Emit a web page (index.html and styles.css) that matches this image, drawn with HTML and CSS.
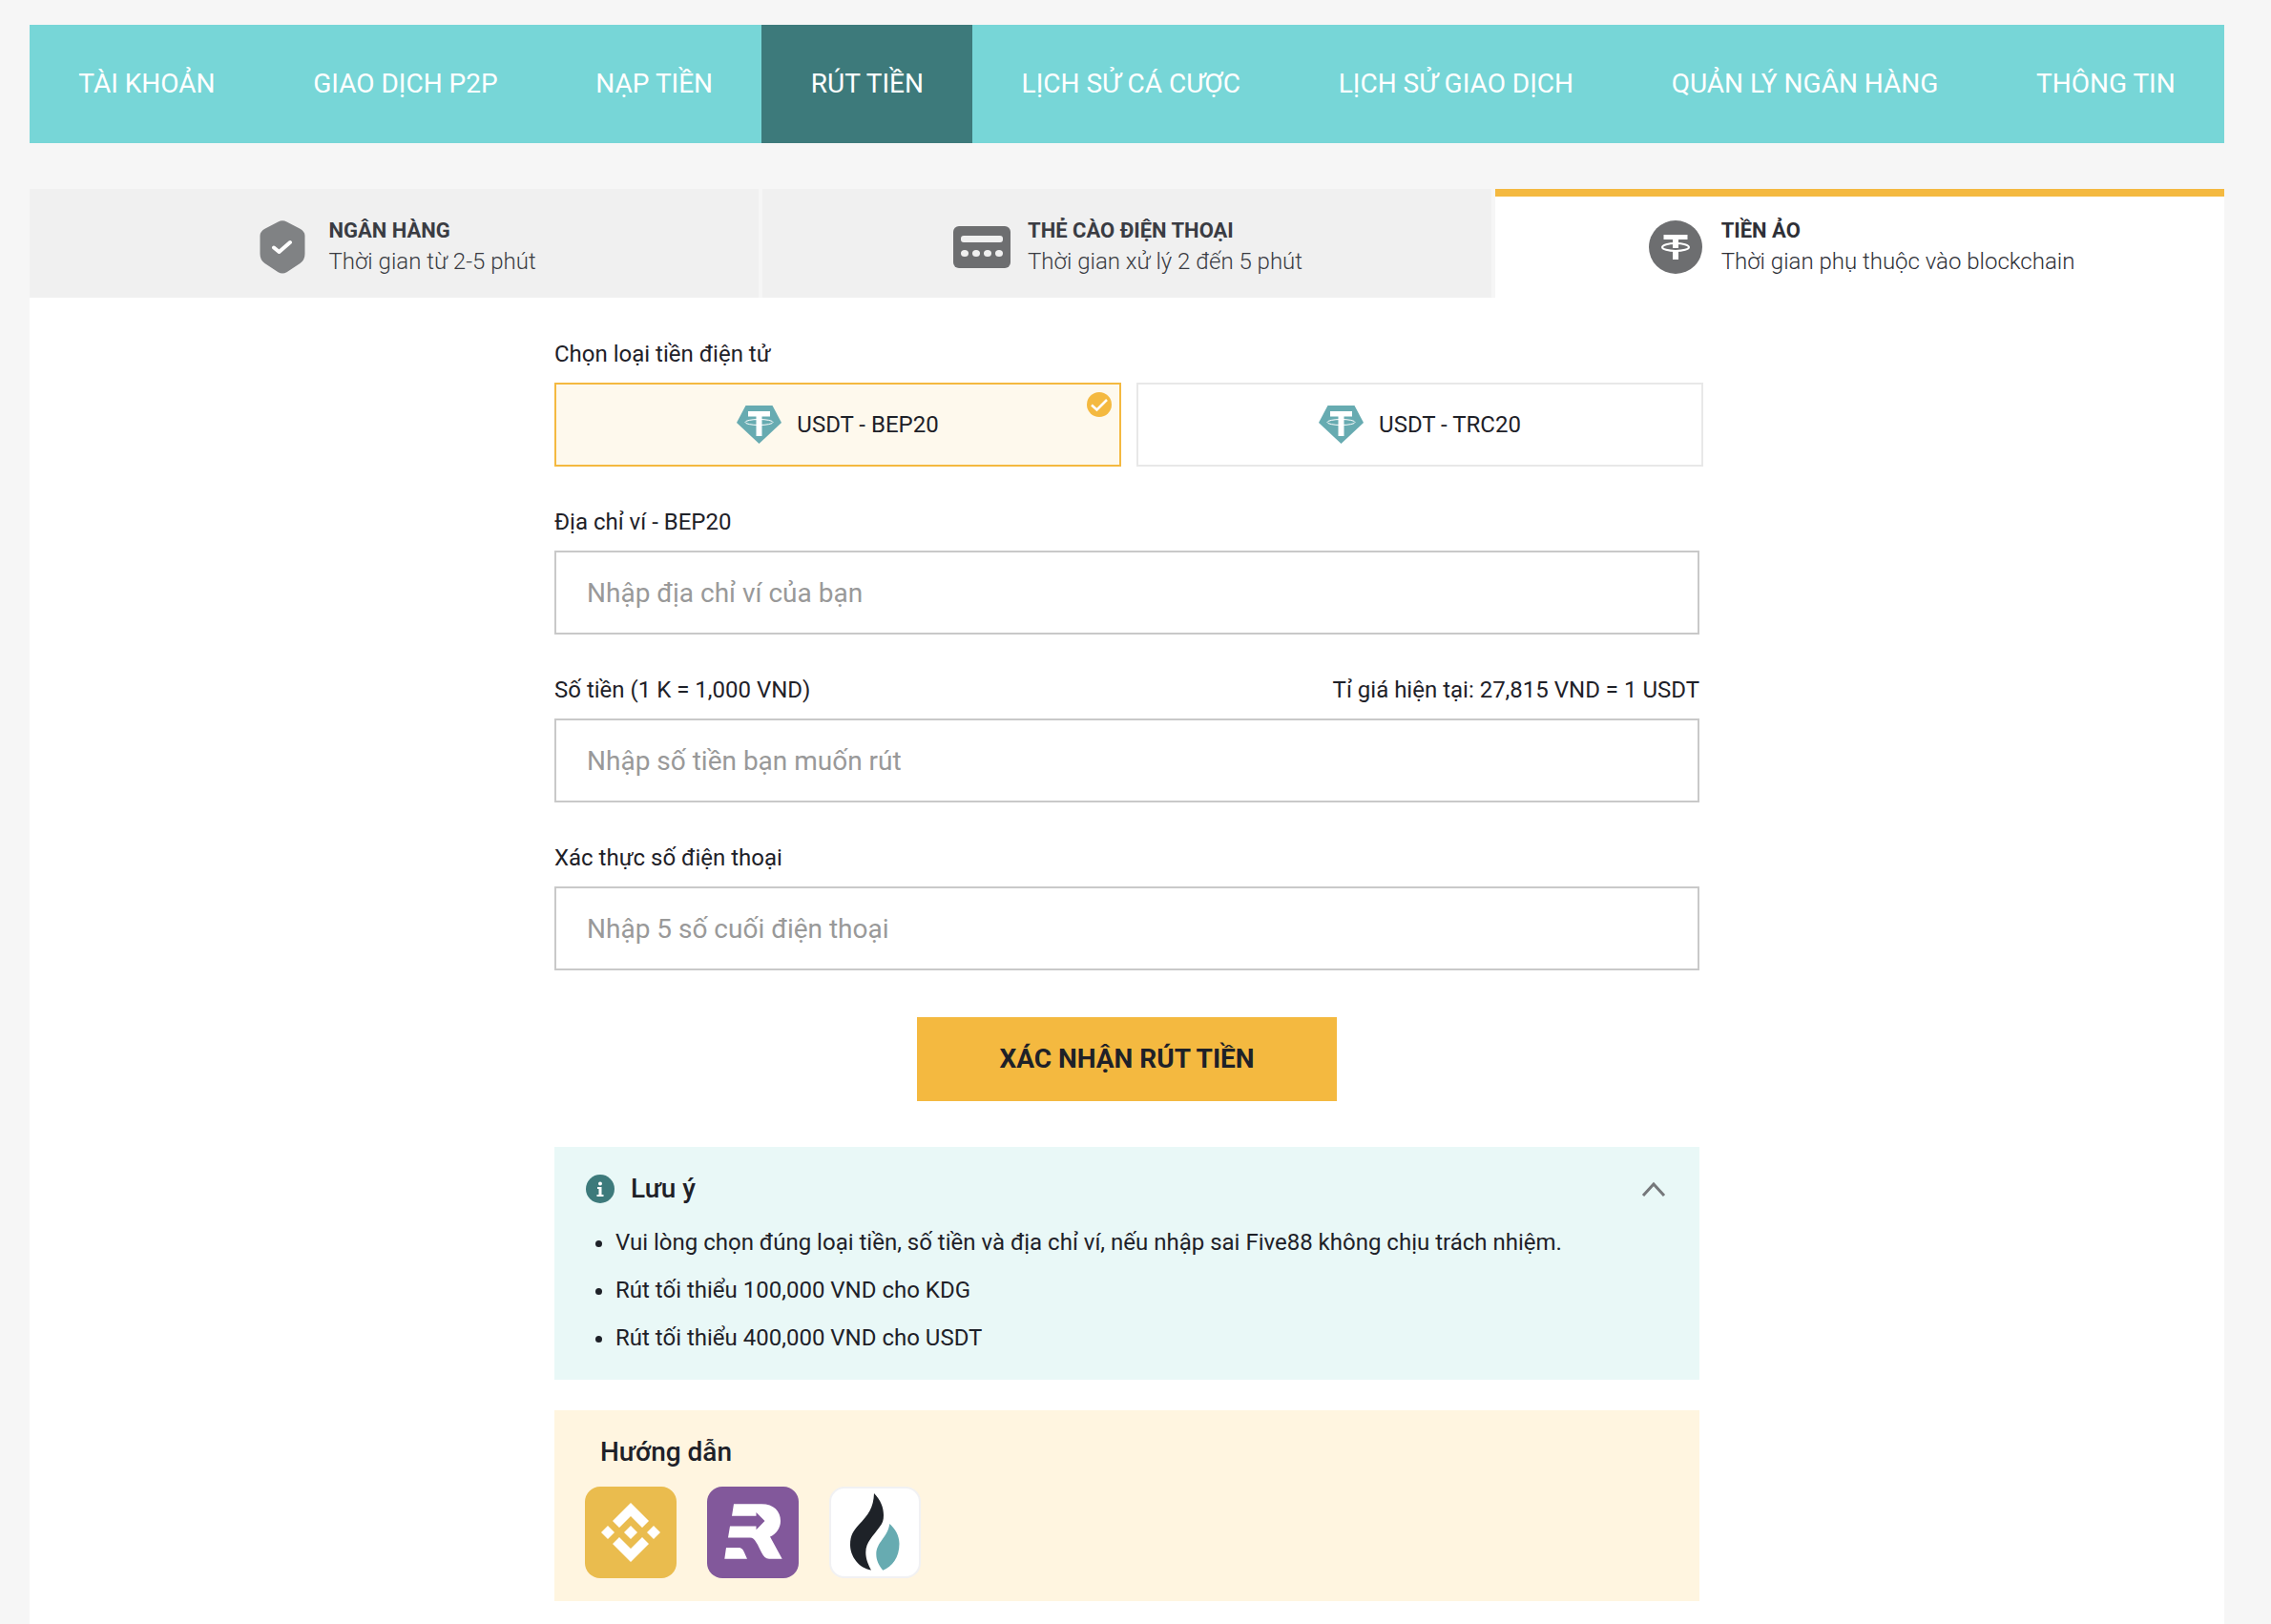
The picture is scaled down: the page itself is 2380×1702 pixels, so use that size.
FILE: index.html
```html
<!DOCTYPE html>
<html lang="vi">
<head>
    <meta charset="UTF-8">
    <meta name="viewport" content="width=device-width, initial-scale=1">
    <title>Rút tiền</title>
    <link rel="stylesheet" href="styles.css">
</head>
<body>
    <nav class="main-nav">
        <a href="#">TÀI KHOẢN</a>
        <a href="#">GIAO DỊCH P2P</a>
        <a href="#">NẠP TIỀN</a>
        <a href="#" class="active">RÚT TIỀN</a>
        <a href="#">LỊCH SỬ CÁ CƯỢC</a>
        <a href="#">LỊCH SỬ GIAO DỊCH</a>
        <a href="#">QUẢN LÝ NGÂN HÀNG</a>
        <a href="#">THÔNG TIN</a>
    </nav>

    <div class="tabs">
        <a href="#" class="tab">
            <svg class="tab-icon" viewBox="0 0 60 60">
                <path d="M25.5 3.4Q30 1 34.500 3.400L48 10.500Q53.500 13.500 53.500 18V37Q53.500 43.500 48.500 47L34.500 56.200Q30 59 25.500 56.200L11.500 47Q6.500 43.500 6.500 37V18Q6.500 13.500 12 10.500Z" fill="#808284"/>
                <path d="M21 30.500L26.500 35L38 25" fill="none" stroke="#fff" stroke-width="4" stroke-linecap="round" stroke-linejoin="round"/>
            </svg>
            <span class="tab-text">
                <strong>NGÂN HÀNG</strong>
                <span>Thời gian từ 2-5 phút</span>
            </span>
        </a>
        <a href="#" class="tab">
            <svg class="tab-icon" viewBox="0 0 60 60">
                <rect x="0" y="8" width="60" height="44" rx="6" fill="#6d6e70"/>
                <rect x="8" y="18" width="44" height="7" rx="3" fill="#f0f0f0"/>
                <g fill="#f0f0f0">
                    <ellipse cx="12" cy="36.500" rx="4" ry="3.500"/>
                    <ellipse cx="24" cy="36.500" rx="4" ry="3.500"/>
                    <ellipse cx="36" cy="36.500" rx="4" ry="3.500"/>
                    <ellipse cx="48" cy="36.500" rx="4" ry="3.500"/>
                </g>
            </svg>
            <span class="tab-text">
                <strong>THẺ CÀO ĐIỆN THOẠI</strong>
                <span>Thời gian xử lý 2 đến 5 phút</span>
            </span>
        </a>
        <a href="#" class="tab active">
            <svg class="tab-icon" viewBox="0 0 60 60">
                <circle cx="30" cy="30" r="28" fill="#6d6e70"/>
                <path d="M17.500 17H42.500V22H33V27H27V22H17.500ZM27 33H33V43H27Z" fill="#fff"/>
                <path d="M27 22H33V31H27Z" fill="#fff"/>
                <ellipse cx="30" cy="30" rx="14" ry="4" fill="none" stroke="#fff" stroke-width="2"/>
            </svg>
            <span class="tab-text">
                <strong>TIỀN ẢO</strong>
                <span>Thời gian phụ thuộc vào blockchain</span>
            </span>
        </a>
    </div>

    <main class="panel">
        <form class="form">
            <div class="field" role="radiogroup" aria-labelledby="coinLabel">
                <div class="field-label" id="coinLabel">Chọn loại tiền điện tử</div>
                <div class="coins">
                    <label class="coin">
                        <input type="radio" name="coin" value="bep20" checked>
                        <svg class="coin-icon" viewBox="0 0 47 40">
                            <path d="M9.500 0H37.500L47 18L23.500 40L0 18Z" fill="#67abb1"/>
                            <path d="M12 6H35V11.500H26.500V32H20.500V11.500H12Z" fill="#fff"/>
                            <ellipse cx="23.500" cy="17.500" rx="14.500" ry="3" fill="none" stroke="#fff" stroke-width="1"/>
                        </svg>
                        <span>USDT - BEP20</span>
                        <svg class="coin-check" viewBox="0 0 26 26">
                            <circle cx="13" cy="13" r="13" fill="#f4b940"/>
                            <path d="M5 13.500L10.500 18.500L21 8" fill="none" stroke="#fff" stroke-width="2.500"/>
                        </svg>
                    </label>
                    <label class="coin">
                        <input type="radio" name="coin" value="trc20">
                        <svg class="coin-icon" viewBox="0 0 47 40">
                            <path d="M9.500 0H37.500L47 18L23.500 40L0 18Z" fill="#67abb1"/>
                            <path d="M12 6H35V11.500H26.500V32H20.500V11.500H12Z" fill="#fff"/>
                            <ellipse cx="23.500" cy="17.500" rx="14.500" ry="3" fill="none" stroke="#fff" stroke-width="1"/>
                        </svg>
                        <span>USDT - TRC20</span>
                        <svg class="coin-check" viewBox="0 0 26 26">
                            <circle cx="13" cy="13" r="13" fill="#f4b940"/>
                            <path d="M5 13.500L10.500 18.500L21 8" fill="none" stroke="#fff" stroke-width="2.500"/>
                        </svg>
                    </label>
                </div>
            </div>

            <div class="field">
                <label class="field-label" for="wallet">Địa chỉ ví - BEP20</label>
                <input class="text-input" type="text" id="wallet" placeholder="Nhập địa chỉ ví của bạn">
            </div>

            <div class="field">
                <div class="field-label">
                    <label for="amount">Số tiền (1 K = 1,000 VND)</label>
                    <span>Tỉ giá hiện tại: 27,815 VND = 1 USDT</span>
                </div>
                <input class="text-input" type="text" id="amount" placeholder="Nhập số tiền bạn muốn rút">
            </div>

            <div class="field">
                <label class="field-label" for="phone">Xác thực số điện thoại</label>
                <input class="text-input" type="text" id="phone" placeholder="Nhập 5 số cuối điện thoại">
            </div>

            <button type="submit" class="submit">XÁC NHẬN RÚT TIỀN</button>
        </form>

        <section class="note">
            <div class="note-head">
                <svg class="note-icon" viewBox="0 0 32 32">
                    <circle cx="16" cy="16" r="15" fill="#3d7a7b"/>
                    <circle cx="16" cy="10.500" r="2" fill="#fff"/>
                    <path d="M13 14H17.500V22H19.500V24H12.500V22H14.500V16H13Z" fill="#fff"/>
                </svg>
                <h2>Lưu ý</h2>
                <button type="button" class="note-toggle" aria-label="Thu gọn">
                    <svg viewBox="0 0 28 18">
                        <path d="M3 16L14 4L25 16" fill="none" stroke="#75777a" stroke-width="3"/>
                    </svg>
                </button>
            </div>
            <ul>
                <li>Vui lòng chọn đúng loại tiền, số tiền và địa chỉ ví, nếu nhập sai Five88 không chịu trách nhiệm.</li>
                <li>Rút tối thiểu 100,000 VND cho KDG</li>
                <li>Rút tối thiểu 400,000 VND cho USDT</li>
            </ul>
        </section>

        <section class="guide">
            <h2>Hướng dẫn</h2>
            <div class="guide-list">
                <a href="#" aria-label="Binance">
                    <svg viewBox="0 0 96 96">
                        <rect width="96" height="96" rx="16" fill="#eabc4e"/>
                        <g fill="#fff">
                            <path d="M48 17L67 36L60 43L48 31L36 43L29 36Z"/>
                            <path d="M48 79L67 60L60 53L48 65L36 53L29 60Z"/>
                            <path d="M48 41L55 48L48 55L41 48Z"/>
                            <path d="M24 41L31 48L24 55L17 48Z"/>
                            <path d="M72 41L79 48L72 55L65 48Z"/>
                        </g>
                    </svg>
                </a>
                <a href="#" aria-label="Remitano">
                    <svg viewBox="0 0 96 96">
                        <rect width="96" height="96" rx="16" fill="#82589b"/>
                        <g fill="#fff">
                            <path d="M28 18.300H57C70 18.300 77 26 77 36C77 44 72 50 66 52.500L78.700 75.700H65C58 75.700 56 65 51.500 58.500C49.500 55 48 53.500 45 53.500H22L24 41.500H51.500V45.300L60.500 36L51.500 27V30.700H26Z"/>
                            <path d="M20 64H33C36.500 64 38 66.500 39 69L42 75.700H18.300Z"/>
                        </g>
                    </svg>
                </a>
                <a href="#" aria-label="Huobi">
                    <svg viewBox="0 0 96 96">
                        <rect x="1" y="1" width="94" height="94" rx="15" fill="#fff" stroke="#f1f1f3" stroke-width="2"/>
                        <path d="M47 7C54 14 57 22 57 30C57 35 56 38.500 53 42C46 52 38.300 58 38.300 69C38.300 76 41 82 44 87.500C31 85.500 22 73 22 61C22 51 25.500 46 31 40C41 29.500 46.500 22 47 7Z" fill="#1e2228"/>
                        <path d="M63.300 39C69 44 73.500 51 73.500 60C73.500 74 66 84 56.300 87.700C52 82.500 49.300 77 49.300 71C49.300 58 61 54 63.300 39Z" fill="#67abb1"/>
                    </svg>
                </a>
            </div>
        </section>
    </main>
</body>
</html>
```
FILE: styles.css
```css
* {
    box-sizing: border-box;
}
body {
    display: flex;
    flex-direction: column;
    min-height: 100vh;
    margin: 0;
    padding: 26px 49px 0 31px;
    font-family: Roboto, "Noto Sans", sans-serif;
    font-size: 24px;
    line-height: 36px;
    color: #1e2128;
    background: #f6f6f6;
}
a {
    color: inherit;
    text-decoration: none;
}
h2 {
    margin: 0;
    font-size: 28px;
    font-weight: 500;
}

/* top navigation */
.main-nav {
    display: flex;
    background: #77d6d7;
}
.main-nav a {
    flex: 1 1 auto;
    padding: 42px 0;
    font-size: 28px;
    line-height: 40px;
    text-align: center;
    white-space: nowrap;
    color: #fff;
}
.main-nav .active {
    background: #3d7a7b;
}

/* payment method tabs */
.tabs {
    display: flex;
    gap: 4px;
    margin-top: 48px;
}
.tab {
    display: flex;
    flex: 1;
    align-items: center;
    justify-content: center;
    gap: 18px;
    height: 114px;
    padding-left: 2px;
    border-top: 8px solid #f0f0f0;
    background: #f0f0f0;
    color: #3a3c43;
}
.tab.active {
    border-top-color: #f4b940;
    background: #fff;
    color: #2e3037;
}
.tab-icon {
    width: 60px;
    height: 60px;
}
.tab-text {
    display: flex;
    flex-direction: column;
    padding-bottom: 2px;
    line-height: 32px;
    font-weight: 300;
}
.tab-text strong {
    font-size: 22px;
    font-weight: 700;
}

.panel {
    flex: 1;
    padding: 41px 24px 24px;
    background: #fff;
}
.form,
.note,
.guide {
    max-width: 1200px;
    margin: 0 auto;
}

/* form */
.field {
    margin-bottom: 40px;
}
.field-label {
    display: flex;
    justify-content: space-between;
    margin-bottom: 12px;
}
.coins {
    display: flex;
    gap: 16px;
    margin-right: -4px;
}
.coin {
    position: relative;
    display: flex;
    flex: 1;
    align-items: center;
    justify-content: center;
    gap: 16px;
    height: 88px;
    border: 2px solid #e8e8e8;
    cursor: pointer;
}
.coin input {
    position: absolute;
    opacity: 0;
}
.coin:has(input:checked) {
    border-color: #f4b940;
    background: #fef9ed;
}
.coin-icon {
    width: 47px;
    height: 40px;
}
.coin-check {
    display: none;
    position: absolute;
    top: 8px;
    right: 8px;
    width: 26px;
    height: 26px;
}
.coin input:checked ~ .coin-check {
    display: block;
}
.text-input {
    display: block;
    width: 100%;
    height: 88px;
    padding: 0 32px;
    border: 2px solid #c9c9c9;
    border-radius: 0;
    background: #fff;
    font: inherit;
    font-size: 28px;
    color: inherit;
}
.text-input::placeholder {
    color: #999;
    opacity: 1;
}
.submit {
    display: block;
    width: 440px;
    height: 88px;
    margin: 49px auto 48px;
    border: 0;
    background: #f4b940;
    font: inherit;
    font-size: 28px;
    font-weight: 700;
    color: inherit;
    cursor: pointer;
}

/* notes */
.note {
    padding: 26px 32px 19px;
    background: #e9f8f7;
}
.note-head {
    display: flex;
    align-items: center;
    gap: 16px;
}
.note-icon {
    width: 32px;
    height: 32px;
}
.note-toggle {
    width: 32px;
    height: 32px;
    margin-left: auto;
    padding: 2px;
    border: 0;
    background: none;
    cursor: pointer;
}
.note-toggle svg {
    display: block;
    width: 28px;
    height: 18px;
}
.note ul {
    margin: 13px 0 0;
    padding-left: 32px;
    line-height: 50px;
}

/* guide links */
.guide {
    margin-top: 32px;
    padding: 24px 32px;
    background: #fff5e0;
}
.guide h2 {
    padding: 0 16px;
    line-height: 40px;
}
.guide-list {
    display: flex;
    gap: 32px;
    margin-top: 16px;
}
.guide-list svg {
    display: block;
    width: 96px;
    height: 96px;
}
```
